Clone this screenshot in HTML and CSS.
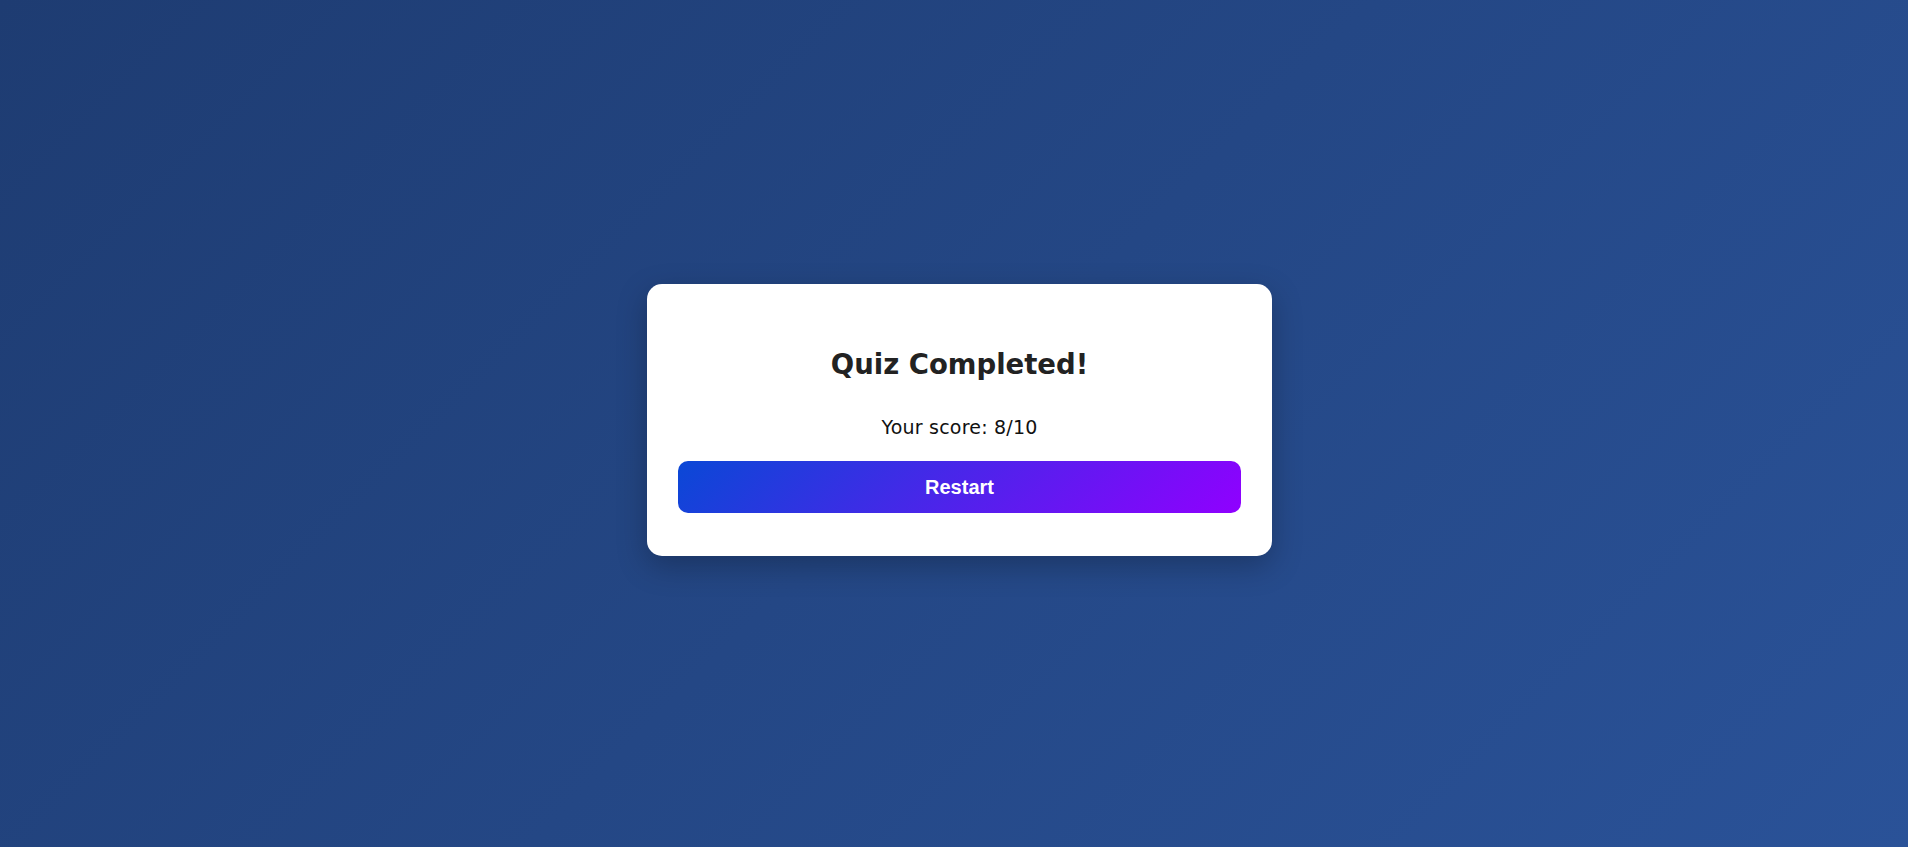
FILE: index.html
```html
<!DOCTYPE html>
<html lang="en">
<head>
<meta charset="utf-8">
<title>Quiz</title>
<link rel="stylesheet" href="styles.css">
</head>
<body>
  <main class="stage">
    <section class="card">
      <h2 class="title">Quiz Completed!</h2>
      <p class="score">Your score: 8/10</p>
      <button class="restart" type="button">Restart</button>
    </section>
  </main>
</body>
</html>
```

FILE: styles.css
```css
* { box-sizing: border-box; }
html, body { margin: 0; height: 100%; }
body {
  font-family: "DejaVu Sans", "Noto Sans", sans-serif;
  background: linear-gradient(135deg, #1e3c72, #2a5298);
}
.stage {
  height: 100vh;
  display: flex;
  align-items: center;
  justify-content: center;
  padding: 0 0 7px 11px;
}
.card {
  width: 625px;
  background: #fff;
  border-radius: 15px;
  padding: 31px 31px 43px;
  box-shadow: 0 10px 30px rgba(0, 0, 0, 0.25);
  text-align: center;
  display: flex;
  flex-direction: column;
}
.title {
  margin: 29px 0 0;
  font-size: 27.5px;
  line-height: 40px;
  font-weight: 700;
  color: #222;
}
.score {
  margin: 29px 0 0;
  font-size: 19px;
  line-height: 28px;
  letter-spacing: 0.2px;
  color: #111;
}
.restart {
  margin-top: 20px;
  height: 52px;
  border: none;
  border-radius: 10px;
  background: linear-gradient(135deg, #0a48d6, #9000ff);
  color: #fff;
  font-family: "Liberation Sans", Arial, sans-serif;
  font-weight: 700;
  font-size: 20px;
  cursor: pointer;
}
```
